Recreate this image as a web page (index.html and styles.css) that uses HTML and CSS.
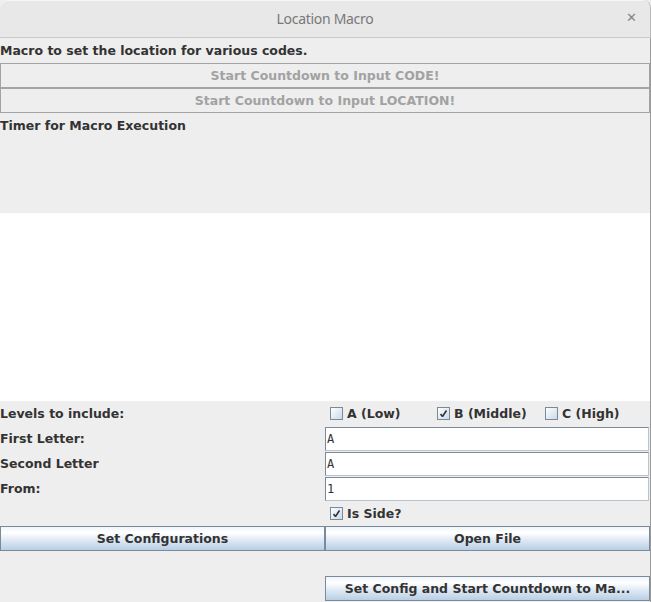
FILE: index.html
```html
<!DOCTYPE html>
<html>
<head>
<meta charset="utf-8">
<link rel="stylesheet" href="styles.css">
</head>
<body>
<div class="window">
  <div class="titlebar">
    <span class="title">Location Macro</span>
    <span class="close">&#x2715;</span>
  </div>
  <div class="content">
    <div class="row label-row">Macro to set the location for various codes.</div>
    <div class="btn disabled">Start Countdown to Input CODE!</div>
    <div class="btn disabled">Start Countdown to Input LOCATION!</div>
    <div class="timer">Timer for Macro Execution</div>
    <div class="white-area"></div>
    <div class="grid">
      <div class="cell label">Levels to include:</div>
      <div class="cell checks">
        <label class="cb"><span class="box"></span>A (Low)</label>
        <label class="cb"><span class="box checked"></span>B (Middle)</label>
        <label class="cb"><span class="box"></span>C (High)</label>
      </div>
      <div class="cell label">First Letter:</div>
      <div class="cell"><div class="field">A</div></div>
      <div class="cell label">Second Letter</div>
      <div class="cell"><div class="field">A</div></div>
      <div class="cell label">From:</div>
      <div class="cell"><div class="field">1</div></div>
      <div class="cell"></div>
      <div class="cell checks"><label class="cb"><span class="box checked"></span>Is Side?</label></div>
      <div class="mbtn">Set Configurations</div>
      <div class="mbtn">Open File</div>
      <div class="cell spacer"></div>
      <div class="cell spacer"></div>
      <div class="cell"></div>
      <div class="mbtn">Set Config and Start Countdown to Ma...</div>
    </div>
  </div>
</div>
</body>
</html>
```
FILE: styles.css
```css
html, body {
  margin: 0;
  padding: 0;
  background: #eeeeee;
}
body {
  width: 651px;
  height: 602px;
  overflow: hidden;
  font-family: "DejaVu Sans", sans-serif;
  font-size: 12.5px;
  font-weight: bold;
  color: #333333;
}
.window {
  width: 651px;
  height: 602px;
  display: flex;
  flex-direction: column;
}
.titlebar {
  height: 37px;
  background: #e8e8e8;
  border-bottom: 1px solid #cbcbcb;
  border-top-right-radius: 8px;
  border-top-left-radius: 8px;
  box-shadow: inset 0 1px 0 #f6f6f6;
  border-right: 1px solid #b8b8b8;
  display: flex;
  align-items: center;
  justify-content: center;
  position: relative;
}
.title {
  font-family: "Noto Sans", sans-serif;
  font-weight: normal;
  font-size: 14px;
  color: #787878;
  letter-spacing: -0.3px;
}
.close {
  position: absolute;
  right: 13px;
  top: 10px;
  font-size: 13px;
  color: #858585;
  font-weight: bold;
}
.content {
  flex: 1;
  background: #eeeeee;
  border-right: 1px solid #9a9a9a;
  display: flex;
  flex-direction: column;
}
.label-row {
  height: 25px;
  line-height: 25px;
}
.btn {
  height: 23px;
  line-height: 23px;
  border: 1px solid #a3a3a3;
  text-align: center;
  color: #a2a2a2;
  background: #eeeeee;
}
.timer {
  height: 100px;
  padding-top: 5px;
  box-sizing: border-box;
}
.white-area {
  height: 188px;
  background: #ffffff;
}
.grid {
  display: grid;
  grid-template-columns: 325px 325px;
  grid-auto-rows: 25px;
}
.cell {
  display: flex;
  align-items: center;
}
.spacer {
  height: 25px;
}
.checks {
  display: grid;
  grid-template-columns: 107px 108px 108px;
  align-items: center;
  padding-left: 5px;
}
.cb {
  display: flex;
  align-items: center;
  gap: 4px;
}
.box {
  width: 11px;
  height: 11px;
  border: 1px solid #7a8a99;
  background: linear-gradient(135deg, #ffffff 0%, #c9d9ea 100%);
  position: relative;
}
.box.checked::after {
  content: "";
  position: absolute;
  left: 2px;
  top: 2px;
  width: 7px;
  height: 7px;
  background:
    no-repeat url("data:image/svg+xml;utf8,<svg xmlns='http://www.w3.org/2000/svg' width='7' height='7'><path d='M0.5 4 L2.5 6.5 L6.5 0.5' fill='none' stroke='%23333' stroke-width='1.6'/></svg>");
}
.field {
  width: 324px;
  height: 24px;
  box-sizing: border-box;
  border: 1px solid #7a8a99;
  border-right-color: #b8c4cf;
  border-bottom-color: #b8c4cf;
  background: #ffffff;
  font-family: "DejaVu Sans Mono", monospace;
  font-weight: normal;
  font-size: 12px;
  color: #333333;
  line-height: 22px;
  padding-left: 1px;
}
.mbtn {
  height: 25px;
  box-sizing: border-box;
  border: 1px solid #7a8a99;
  background: linear-gradient(to bottom, #f0f4fa 0%, #ffffff 25%, #dce7f3 60%, #b8cfe5 100%);
  display: flex;
  align-items: center;
  justify-content: center;
  color: #333333;
}
```
